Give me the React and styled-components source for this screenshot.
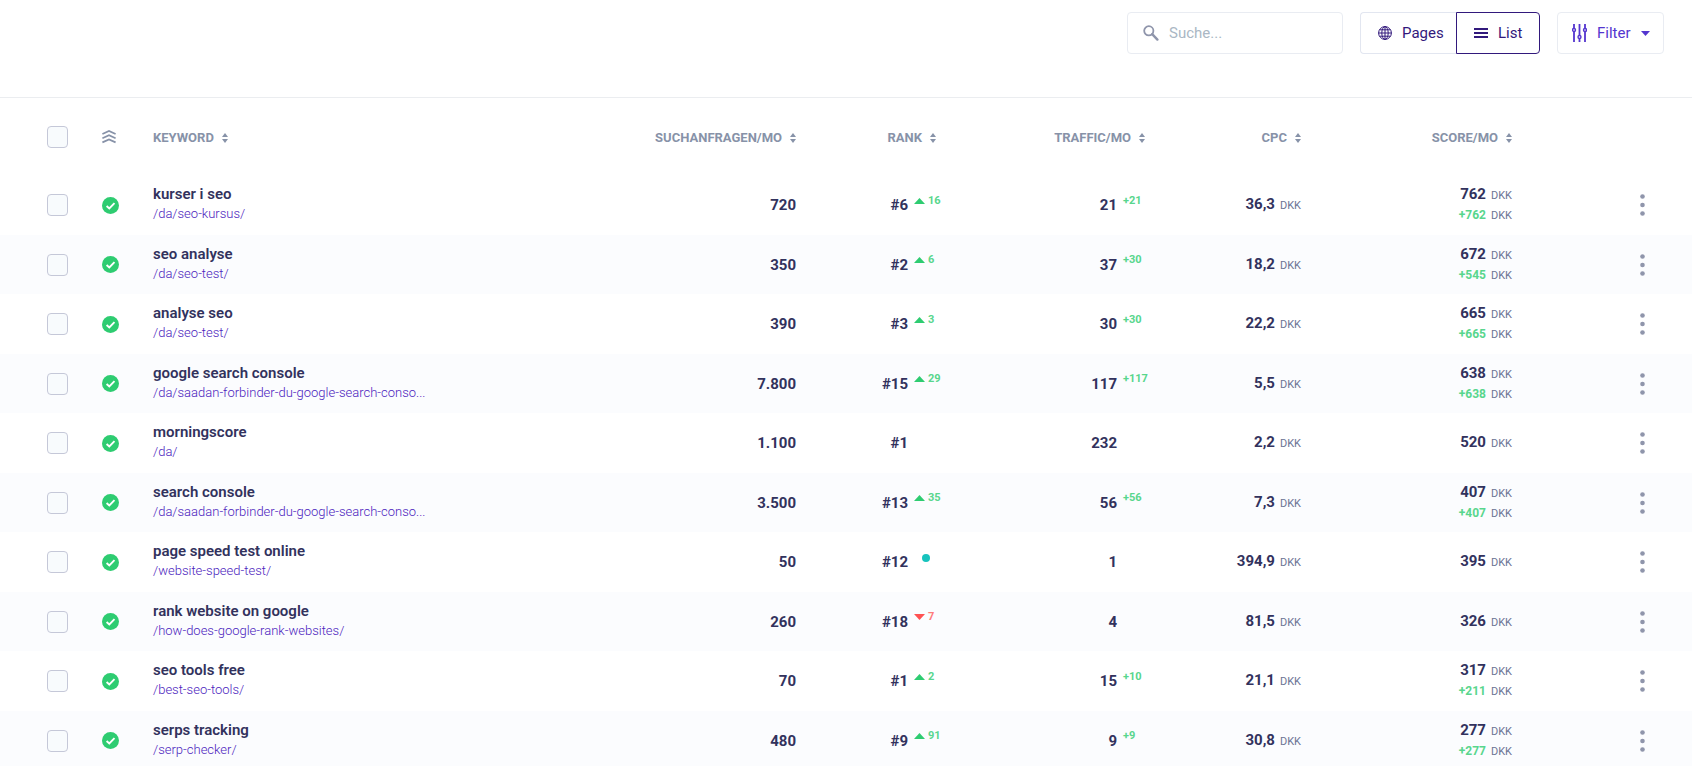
import { useState } from "react";
import styled, { createGlobalStyle } from "styled-components";

const GlobalStyle = createGlobalStyle`
  * {
    box-sizing: border-box;
  }
  body {
    margin: 0;
    background-color: #fff;
    color: #32325d;
    font-family: Roboto, "Liberation Sans", sans-serif;
    font-size: 15px;
  }
  button, input {
    font-family: inherit;
  }
`;

const Toolbar = styled.header`
  display: flex;
  justify-content: flex-end;
  gap: 17px;
  padding: 12px 28px 43px;
  border-bottom: 1px solid #ebedf0;
`;

const SearchBox = styled.label`
  display: flex;
  align-items: center;
  gap: 10px;
  width: 216px;
  height: 42px;
  padding: 0 15px;
  border: 1px solid #e9ecf2;
  border-radius: 4px;
  color: #8f95ab;
`;

const SearchInput = styled.input`
  flex: 1;
  min-width: 0;
  padding: 0;
  border: none;
  outline: none;
  background: transparent;
  color: #32325d;
  font-size: 15px;
  &::placeholder {
    color: #aab7c4;
    opacity: 1;
  }
`;

const ButtonGroup = styled.div`
  display: flex;
`;

const ToolButton = styled.button`
  display: inline-flex;
  align-items: center;
  gap: 10px;
  height: 42px;
  padding: 0 12px 0 17px;
  border: 1px solid ${props => props.$active ? '#32197c' : '#e2e6f0'};
  border-radius: 4px;
  background-color: #fff;
  color: #32197c;
  font-size: 15px;
  cursor: pointer;
  ${ButtonGroup} &:first-child {
    width: 96px;
    border-right: none;
    border-radius: 4px 0 0 4px;
  }
  ${ButtonGroup} &:last-child {
    width: 84px;
    border-radius: 0 4px 4px 0;
  }
`;

const FilterButton = styled(ToolButton)`
  width: 107px;
  padding: 0 13px 0 14px;
  border-color: #e9ecf2;
  color: #5436cf;
`;

const Table = styled.table`
  width: 100%;
  table-layout: fixed;
  border-collapse: collapse;
`;

const Col = styled.col`
  width: ${props => props.$width};
`;

const HeadCell = styled.th`
  height: 77px;
  padding: 0;
  text-align: ${props => props.$align || 'right'};
  font-weight: normal;
`;

const SortButton = styled.button`
  display: inline-flex;
  align-items: center;
  gap: 8px;
  padding: 0;
  border: none;
  background: transparent;
  color: #8792a8;
  font-size: 13px;
  font-weight: 700;
  line-height: 16px;
  white-space: nowrap;
  vertical-align: middle;
  cursor: pointer;
`;

const Row = styled.tr`
  height: 60px;
  &:nth-child(even) {
    height: 59px;
    background-color: #fbfcfe;
  }
`;

const Cell = styled.td`
  padding: 0;
  text-align: ${props => props.$align || 'right'};
  white-space: nowrap;
`;

const CheckCell = styled(Cell)`
  padding-left: 47px;
`;

const KeywordCell = styled(Cell)`
  padding-bottom: 2px;
`;

const CheckHead = styled(HeadCell)`
  padding-left: 47px;
`;

const Checkbox = styled.input`
  display: block;
  appearance: none;
  width: 21px;
  height: 22px;
  margin: 0;
  border: 1px solid #c5c8d8;
  border-radius: 4px;
  background-color: #f8fbfd;
  cursor: pointer;
  &:checked {
    background-color: #5436cf;
  }
`;

const Icon = styled.svg`
  display: block;
  flex: none;
`;

const Keyword = styled.div`
  color: #32325d;
  font-size: 15px;
  font-weight: 600;
  line-height: 19px;
`;

const PageLink = styled.a`
  display: block;
  color: #4a22bd;
  font-size: 13px;
  font-weight: 300;
  line-height: 19px;
  text-decoration: none;
`;

const Figure = styled.div`
  display: flex;
  align-items: center;
  justify-content: flex-end;
  line-height: 20px;
`;

const Amount = styled.div`
  line-height: 18px;
`;

const Value = styled.span`
  font-size: 15px;
  font-weight: 700;
`;

const Gain = styled.span`
  color: #58d68d;
  font-size: 12px;
  font-weight: 700;
`;

const Currency = styled.span`
  margin-left: 5px;
  color: #6b7394;
  font-size: 11px;
`;

const Delta = styled.span`
  display: flex;
  align-items: center;
  gap: 3px;
  width: 28px;
  padding-left: 6px;
  margin-bottom: 9px;
  color: ${props => props.$down ? '#ff7a7a' : '#58d68d'};
  font-size: 11px;
  font-weight: 700;
  line-height: 12px;
`;

const Dot = styled.span`
  width: 8px;
  height: 8px;
  margin-left: 8px;
  border-radius: 50%;
  background-color: #17c3bd;
`;

const MenuButton = styled.button`
  display: inline-flex;
  padding: 0;
  margin-right: 47px;
  border: none;
  background: transparent;
  color: #8f95ab;
  vertical-align: middle;
  cursor: pointer;
`;

const columns = ["SUCHANFRAGEN/MO", "RANK", "TRAFFIC/MO", "CPC", "SCORE/MO"];

const keywords = [
  { name: "kurser i seo", url: "/da/seo-kursus/", volume: "720", rank: 6, up: 16, traffic: "21", trafficUp: 21, cpc: "36,3", score: "762", scoreUp: 762 },
  { name: "seo analyse", url: "/da/seo-test/", volume: "350", rank: 2, up: 6, traffic: "37", trafficUp: 30, cpc: "18,2", score: "672", scoreUp: 545 },
  { name: "analyse seo", url: "/da/seo-test/", volume: "390", rank: 3, up: 3, traffic: "30", trafficUp: 30, cpc: "22,2", score: "665", scoreUp: 665 },
  { name: "google search console", url: "/da/saadan-forbinder-du-google-search-conso...", volume: "7.800", rank: 15, up: 29, traffic: "117", trafficUp: 117, cpc: "5,5", score: "638", scoreUp: 638 },
  { name: "morningscore", url: "/da/", volume: "1.100", rank: 1, traffic: "232", cpc: "2,2", score: "520" },
  { name: "search console", url: "/da/saadan-forbinder-du-google-search-conso...", volume: "3.500", rank: 13, up: 35, traffic: "56", trafficUp: 56, cpc: "7,3", score: "407", scoreUp: 407 },
  { name: "page speed test online", url: "/website-speed-test/", volume: "50", rank: 12, isNew: true, traffic: "1", cpc: "394,9", score: "395" },
  { name: "rank website on google", url: "/how-does-google-rank-websites/", volume: "260", rank: 18, down: 7, traffic: "4", cpc: "81,5", score: "326" },
  { name: "seo tools free", url: "/best-seo-tools/", volume: "70", rank: 1, up: 2, traffic: "15", trafficUp: 10, cpc: "21,1", score: "317", scoreUp: 211 },
  { name: "serps tracking", url: "/serp-checker/", volume: "480", rank: 9, up: 91, traffic: "9", trafficUp: 9, cpc: "30,8", score: "277", scoreUp: 277 },
];

const SearchIcon = () => (
  <Icon width="16" height="16" viewBox="0 0 16 16" fill="none" stroke="currentColor">
    <circle cx="5.8" cy="5.8" r="4.6" strokeWidth="1.8" />
    <path d="M9.2 9.2 14.4 14.6" strokeWidth="2.4" strokeLinecap="round" />
  </Icon>
);

const GlobeIcon = () => (
  <Icon width="14" height="14" viewBox="0 0 14 14" fill="none" stroke="currentColor">
    <circle cx="7" cy="7" r="6.4" />
    <ellipse cx="7" cy="7" rx="3.2" ry="6.4" />
    <path d="M7 .6v12.8M.6 7h12.8M1.6 3.8h10.8M1.6 10.2h10.8" />
  </Icon>
);

const ListIcon = () => (
  <Icon width="14" height="12" viewBox="0 0 14 12" fill="currentColor">
    <path d="M0 1h14v2H0zM0 5h14v2H0zM0 9h14v2H0z" />
  </Icon>
);

const FilterIcon = () => (
  <Icon width="15" height="18" viewBox="0 0 15 18" fill="none" stroke="currentColor" strokeWidth="1.8">
    <path d="M2 0v4M2 8v10M7.5 0v11M7.5 15v3M13 0v4M13 8v10" />
    <circle cx="2" cy="6" r="1.5" strokeWidth="1.4" />
    <circle cx="7.5" cy="13" r="1.5" strokeWidth="1.4" />
    <circle cx="13" cy="6" r="1.5" strokeWidth="1.4" />
  </Icon>
);

const CaretIcon = () => (
  <Icon width="9" height="5" viewBox="0 0 9 5" fill="currentColor">
    <path d="M0 0h9L4.5 5z" />
  </Icon>
);

const TrendIcon = ({ down }) => (
  <Icon width="11" height="6" viewBox="0 0 11 6" fill={down ? "#ff5252" : "#2ecc71"}>
    <path d={down ? "M0 0h11L5.5 6z" : "M0 6 5.5 0 11 6z"} />
  </Icon>
);

const SortIcon = () => (
  <Icon width="6" height="10" viewBox="0 0 6 10" fill="currentColor">
    <path d="M0 4 3 0l3 4zM0 6h6l-3 4z" />
  </Icon>
);

const PriorityIcon = () => (
  <Icon width="14" height="14" viewBox="0 0 14 14" fill="none" stroke="#8792a8" strokeWidth="1.8">
    <path d="M.4 4 7 1l6.6 3M.4 8.2 7 5.2l6.6 3M.4 12.4 7 9.4l6.6 3" />
  </Icon>
);

const CheckIcon = () => (
  <Icon width="17" height="17" viewBox="0 0 17 17">
    <circle cx="8.5" cy="8.5" r="8.5" fill="#2ecc71" />
    <path d="M4.6 9 7.3 11.4 12.5 6.1" fill="none" stroke="#fff" strokeWidth="1.9" />
  </Icon>
);

const DotsIcon = () => (
  <Icon width="5" height="22" viewBox="0 0 5 22" fill="currentColor">
    <circle cx="2.5" cy="2.5" r="2.3" />
    <circle cx="2.5" cy="11" r="2.3" />
    <circle cx="2.5" cy="19.5" r="2.3" />
  </Icon>
);

const KeywordRow = ({ item }) => (
  <Row>
    <CheckCell $align="left">
      <Checkbox type="checkbox" aria-label={item.name} />
    </CheckCell>
    <Cell><CheckIcon /></Cell>
    <KeywordCell $align="left">
      <Keyword>{item.name}</Keyword>
      <PageLink href={item.url}>{item.url}</PageLink>
    </KeywordCell>
    <Cell><Value>{item.volume}</Value></Cell>
    <Cell>
      <Figure>
        <Value>#{item.rank}</Value>
        <Delta $down={item.down}>
          {(item.up || item.down) && <TrendIcon down={item.down} />}
          {item.up || item.down}
          {item.isNew && <Dot />}
        </Delta>
      </Figure>
    </Cell>
    <Cell>
      <Figure>
        <Value>{item.traffic}</Value>
        <Delta>{item.trafficUp && `+${item.trafficUp}`}</Delta>
      </Figure>
    </Cell>
    <Cell>
      <Amount>
        <Value>{item.cpc}</Value>
        <Currency>DKK</Currency>
      </Amount>
    </Cell>
    <Cell>
      <Amount>
        <Value>{item.score}</Value>
        <Currency>DKK</Currency>
      </Amount>
      {item.scoreUp && (
        <Amount>
          <Gain>+{item.scoreUp}</Gain>
          <Currency>DKK</Currency>
        </Amount>
      )}
    </Cell>
    <Cell>
      <MenuButton type="button" aria-label="Menu"><DotsIcon /></MenuButton>
    </Cell>
  </Row>
);

export default function App() {
  const [view, setView] = useState("list");
  const [search, setSearch] = useState("");

  return (
    <>
      <GlobalStyle />
      <Toolbar>
        <SearchBox>
          <SearchIcon />
          <SearchInput
            type="text"
            placeholder="Suche..."
            aria-label="Suche"
            value={search}
            onChange={ev => setSearch(ev.target.value)}
          />
        </SearchBox>
        <ButtonGroup>
          <ToolButton type="button" $active={view === "pages"} onClick={() => setView("pages")}>
            <GlobeIcon />Pages
          </ToolButton>
          <ToolButton type="button" $active={view === "list"} onClick={() => setView("list")}>
            <ListIcon />List
          </ToolButton>
        </ButtonGroup>
        <FilterButton type="button">
          <FilterIcon />Filter<CaretIcon />
        </FilterButton>
      </Toolbar>
      <Table>
        <colgroup>
          <Col $width="102px" />
          <Col $width="51px" />
          <Col />
          <Col $width="180px" />
          <Col $width="140px" />
          <Col $width="209px" />
          <Col $width="156px" />
          <Col $width="211px" />
          <Col $width="180px" />
        </colgroup>
        <thead>
          <tr>
            <CheckHead $align="left"><Checkbox type="checkbox" aria-label="Alle" /></CheckHead>
            <HeadCell><PriorityIcon /></HeadCell>
            <HeadCell $align="left"><SortButton type="button">KEYWORD<SortIcon /></SortButton></HeadCell>
            {columns.map(label => (
              <HeadCell key={label}>
                <SortButton type="button">{label}<SortIcon /></SortButton>
              </HeadCell>
            ))}
            <HeadCell />
          </tr>
        </thead>
        <tbody>
          {keywords.map(item => <KeywordRow key={item.name} item={item} />)}
        </tbody>
      </Table>
    </>
  );
}
